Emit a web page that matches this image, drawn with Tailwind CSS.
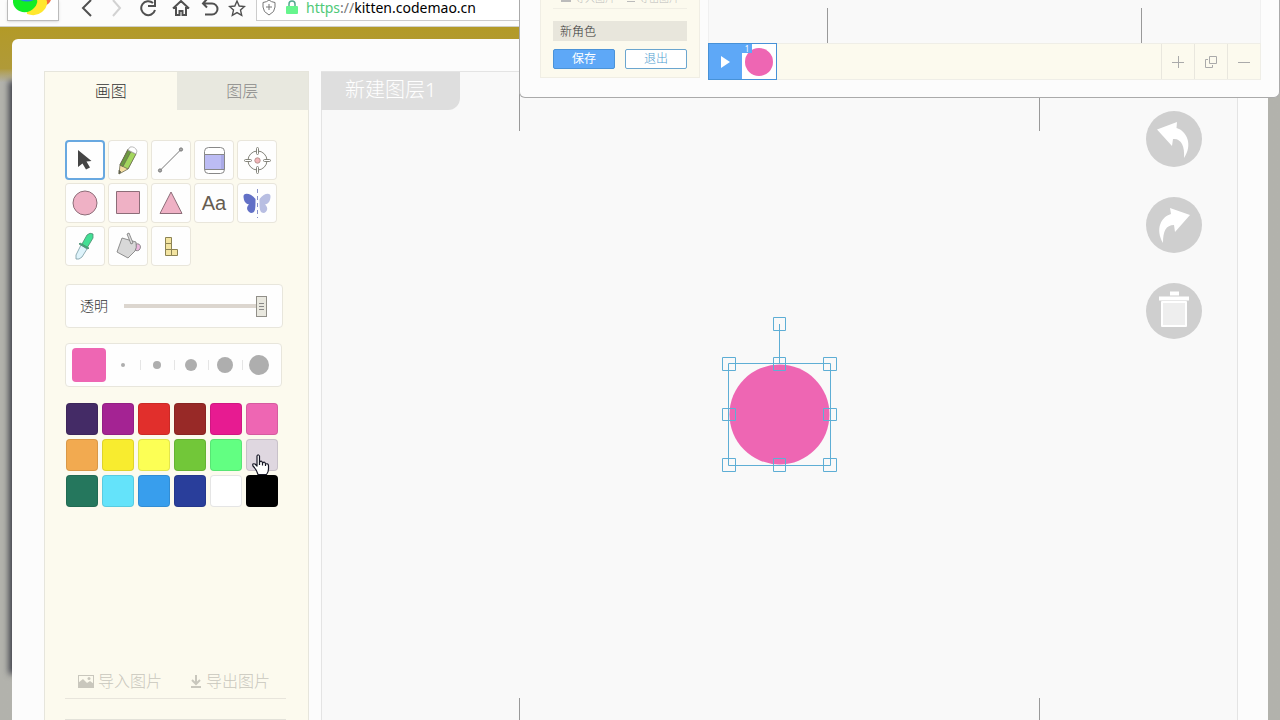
<!DOCTYPE html>
<html lang="zh-CN">
<head>
<meta charset="utf-8">
<meta name="viewport" content="width=device-width, initial-scale=1">
<title>画图</title>
<script src="https://cdn.jsdelivr.net/npm/@tailwindcss/browser@4"></script>
</head>
<body class="relative flex h-screen flex-col overflow-hidden bg-[#b2b2ac] font-['Noto_Sans','Noto_Sans_CJK_SC',sans-serif] font-light text-[#333]">

<!-- Browser toolbar -->
<header class="flex h-[27px] shrink-0 items-start border-b border-[#cfcfc8] bg-[#fcfcfc] pl-[7px] text-[#505050]">
  <div class="h-[21px] w-[52px] border-x border-b border-[#bbb] bg-white shadow-sm">
    <svg class="h-5 w-12" viewBox="0 0 48 20" aria-hidden="true">
      <path d="M24-4 43-10Q46 3 36 6Z" fill="#f36c3d"/>
      <path d="M36-4Q43 4 34 12Q28 17 19 14L18 5Z" fill="#ffe72e"/>
      <path d="M5 0C4 9 14 15 22 11C28 8 30 2 29 0Z" fill="#12ed25"/>
      <path d="M12 0Q21 4 29-2L24-5Z" fill="#2684e8"/>
    </svg>
  </div>
  <nav class="ml-[14px] flex h-[18px]" aria-label="浏览器导航">
    <button class="grid w-7 place-items-center" aria-label="后退"><svg class="size-[18px]" viewBox="0 0 18 18" fill="none" stroke="currentColor" stroke-width="2"><path d="M13 0 5 8l8 8"/></svg></button>
    <button class="grid w-[30px] place-items-center" aria-label="前进"><svg class="size-[18px]" viewBox="0 0 18 18" fill="none" stroke="#d2d2d2" stroke-width="2"><path d="m6 0 7 8-7 8"/></svg></button>
    <button class="grid w-[34px] place-items-center" aria-label="刷新"><svg class="size-[18px]" viewBox="0 0 18 18" fill="none" stroke="currentColor" stroke-width="2"><path d="M16 10A7 7 0 1 1 14 3M16-1V6H9"/></svg></button>
    <button class="grid w-8 place-items-center" aria-label="主页"><svg class="size-[18px]" viewBox="0 0 18 18" fill="none" stroke="currentColor" stroke-width="2"><path d="M1 8.500 9 1l8 7.500M4 7v8h3.500v-4h3v4H14V7"/></svg></button>
    <button class="grid w-[26px] place-items-center" aria-label="撤销"><svg class="size-[18px]" viewBox="0 0 18 18" fill="none" stroke="currentColor" stroke-width="2"><path d="M6-1 2 3.500l4 4M2 3.500h9a5.500 5.500 0 0 1 0 11H4"/></svg></button>
    <button class="grid w-7 place-items-center" aria-label="收藏"><svg class="size-[18px]" viewBox="0 0 18 18" fill="none" stroke="currentColor" stroke-width="1.400"><path d="m9 1 2.200 5 5.300.500-4 3.600 1.200 5.300L9 12.600l-4.700 2.800 1.200-5.300-4-3.600L6.800 6Z"/></svg></button>
  </nav>
  <div class="ml-[5px] flex h-[21px] flex-1 items-start border-b border-l border-[#ccc] bg-white pl-[5px]">
    <svg class="h-4 w-[14px]" viewBox="0 0 14 16" fill="none" stroke="#777" aria-hidden="true"><path d="M1 2.500Q5 2 7 0Q9 2 13 2.500V7Q13 12 7 15Q1 12 1 7ZM4 7h6M7 4v6"/></svg>
    <svg class="ml-[10px] h-4 w-3" viewBox="0 0 12 16" aria-hidden="true"><path d="M3 7V4a3 3 0 0 1 6 0v3" fill="none" stroke="#55a78f" stroke-width="1.500"/><rect y="6" width="12" height="8" rx="1" fill="#66f58d"/></svg>
    <a href="https://kitten.codemao.cn" class="ml-2 text-sm leading-4 font-normal text-black"><span class="text-[#4fc978]">https</span><span class="text-[#777]">://</span>kitten.codemao.cn</a>
  </div>
</header>

<!-- Dimmed page behind the editor -->
<div class="relative flex min-h-0 flex-1 flex-col bg-linear-to-b from-[#b39a27] from-0% via-[#b09a38] via-6% to-[#b2b2ac] to-8% px-3 pt-3">
  <div class="absolute top-[54px] bottom-[46px] left-[9px] w-5 bg-[#3c3e48] blur-[3px]"></div>
  <main class="relative flex min-h-0 flex-1 rounded-t-md bg-[#fcfcfc] pt-8 pr-[30px] pl-8">

    <!-- Tool panel -->
    <aside class="flex w-[265px] shrink-0 flex-col border border-b-0 border-[#e6e5dc] bg-[#fcfaee]">
      <div class="flex h-[38px] shrink-0 text-base" role="tablist">
        <button role="tab" aria-selected="true" class="flex-1 pb-px">画图</button>
        <button role="tab" aria-selected="false" class="flex-1 bg-[#e8e8df] pb-px text-[#888]">图层</button>
      </div>

      <div class="flex flex-1 flex-col px-5 pt-[30px]">
        <div class="grid grid-cols-[repeat(5,40px)] gap-[3px] *:h-10 *:rounded *:bg-[#fefefe]">
          <button aria-label="选择" aria-pressed="true" class="inset-ring-2 inset-ring-[#68a8e0]"><svg class="size-10" viewBox="0 0 40 40"><path d="M13 10v17l4.500-3.500 3.500 6 4-2-3.500-6 5-.500Z" fill="#444"/></svg></button>
          <button aria-label="铅笔" class="inset-ring inset-ring-[#e9e6db]"><svg class="size-10" viewBox="0 0 40 40" stroke="#6c6c52" stroke-width=".8" stroke-linejoin="round"><path d="m12 25 8-16 8 4-8 16-9 5Z" fill="#f5dda0"/><path d="m12 25 8-15 8 4-8 15Z" fill="#a4d65e"/><path d="m12 25 8-15 3 1.500-8 15Z" fill="#6c9b40"/><path d="m20 10 2-3q5-1 7 4l-1 3Z" fill="#fff" stroke="#aaa"/><path d="m11 30 2 2-2 2Z" fill="#555"/></svg></button>
          <button aria-label="直线" class="inset-ring inset-ring-[#e9e6db]"><svg class="size-10" viewBox="0 0 40 40" fill="#aaa" stroke="#777"><path d="M9 30.500 30 9.500"/><circle cx="9" cy="30.500" r="1.600"/><circle cx="30" cy="9.500" r="1.600"/></svg></button>
          <button aria-label="橡皮" class="inset-ring inset-ring-[#e9e6db]"><svg class="size-10" viewBox="0 0 40 40" stroke="#888"><rect x="10.500" y="7.500" width="20" height="26" rx="4" fill="#fff"/><path d="M10.500 14.500h20v15h-20Z" fill="#bcbcf4"/><path d="M27 15v14h3V15Z" fill="#aaaae6" stroke="none"/></svg></button>
          <button aria-label="中心点" class="inset-ring inset-ring-[#e9e6db]"><svg class="size-10" viewBox="0 0 40 40" fill="#fff" stroke="#85857c"><circle cx="20.500" cy="20.500" r="9.500"/><circle cx="20.500" cy="20.500" r="2.700" fill="#f2b5b9" stroke="#b9948f"/><rect x="19.500" y="7.500" width="2" height="7" rx="1"/><rect x="19.500" y="26.500" width="2" height="7" rx="1"/><rect x="7.500" y="19.500" width="7" height="2" rx="1"/><rect x="26.500" y="19.500" width="7" height="2" rx="1"/></svg></button>
          <button aria-label="圆形" class="inset-ring inset-ring-[#e9e6db]"><svg class="size-10" viewBox="0 0 40 40"><circle cx="20" cy="20" r="12" fill="#efb1c5" stroke="#8c6d78"/></svg></button>
          <button aria-label="矩形" class="inset-ring inset-ring-[#e9e6db]"><svg class="size-10" viewBox="0 0 40 40"><path d="M8.500 8.500h23v22h-23Z" fill="#efb1c5" stroke="#8c6d78"/></svg></button>
          <button aria-label="三角形" class="inset-ring inset-ring-[#e9e6db]"><svg class="size-10" viewBox="0 0 40 40"><path d="m20 9 11 21.500H9Z" fill="#efb1c5" stroke="#8c6d78"/></svg></button>
          <button aria-label="文字" class="font-['Liberation_Sans',sans-serif] text-xl font-normal text-[#665c50] inset-ring inset-ring-[#e9e6db]">Aa</button>
          <button aria-label="对称" class="inset-ring inset-ring-[#e9e6db]"><svg class="size-10" viewBox="0 0 40 40"><path d="M18.500 16C14 10 6 9 6.500 14Q7 21 12 21.500C8 25 11 29 14 30C18.500 30 18.500 26 18.500 16Z" fill="#6270c6"/><path d="M22.500 16C27 10 34 9 33.500 14Q33 21 28 21.500C32 25 30 29 27 30C22.500 30 22.500 26 22.500 16Z" fill="#b8bee2"/><path d="M20.500 6v29" stroke="#8790c7" stroke-dasharray="4 3"/></svg></button>
          <button aria-label="取色" class="inset-ring inset-ring-[#e9e6db]"><svg class="size-10" viewBox="0 0 40 40" stroke="#4e8a71" stroke-width=".8"><path d="m16 19 6 4-5 8q-3 3-6 2v-4Z" fill="#def3fb" stroke="#789aa2"/><path d="m17 18 5-9q3-3 6-1v4l-6 10Z" fill="#43df94"/><path d="m14 18 9 5 1-1-9-5Z" fill="#37ba7a"/></svg></button>
          <button aria-label="填充" class="inset-ring inset-ring-[#e9e6db]"><svg class="size-10" viewBox="0 0 40 40" stroke="#777" stroke-width=".8" stroke-linejoin="round"><path d="M28 18q4-1 4.500 3-.500 4.500-5 3.500Z" fill="#ebb8dd"/><path d="m14 12 14 4q1 6-1 9l-7 7-11-6Z" fill="#d8d8d8"/><path d="m19 8 2-1 4 10-2 1Z" fill="#ddd"/></svg></button>
          <button aria-label="图块" class="inset-ring inset-ring-[#e9e6db]"><svg class="size-10" viewBox="0 0 40 40" fill="#f3e4a1" stroke="#8c8353"><path d="M14.500 11.500h6v6h-6Zm0 6h6v6h-6Zm0 6h6v6h-6Zm6 0h6v6h-6Z"/></svg></button>
        </div>

        <div class="mt-[18px] flex h-11 w-[218px] items-center rounded border border-[#e8e6dc] bg-[#fefefe] pl-[14px]">
          <label for="opacity" class="text-sm">透明</label>
          <input id="opacity" type="range" min="0" max="100" value="100" class="ml-4 h-6 w-[143px] appearance-none bg-transparent [&::-webkit-slider-runnable-track]:h-1 [&::-webkit-slider-runnable-track]:bg-[#dcd6cf] [&::-webkit-slider-thumb]:-mt-2 [&::-webkit-slider-thumb]:h-[21px] [&::-webkit-slider-thumb]:w-[11px] [&::-webkit-slider-thumb]:appearance-none [&::-webkit-slider-thumb]:border [&::-webkit-slider-thumb]:border-[#918f88] [&::-webkit-slider-thumb]:bg-[linear-gradient(#888,#888),linear-gradient(#888,#888),linear-gradient(#888,#888),linear-gradient(#e9e8df,#e9e8df)] [&::-webkit-slider-thumb]:bg-[size:5px_1px,5px_1px,5px_1px,100%_100%] [&::-webkit-slider-thumb]:bg-[position:2px_6px,2px_9px,2px_12px,0_0] [&::-webkit-slider-thumb]:bg-no-repeat">
        </div>

        <div class="mt-[15px] flex h-11 w-[217px] items-center rounded border border-[#e8e6dc] bg-[#fefefe] pl-[6px]">
          <button aria-label="当前颜色" class="size-[34px] rounded bg-[#ee66b3]"></button>
          <div class="flex *:grid *:h-6 *:w-[34px] *:place-items-center">
            <button aria-label="粗细 1"><span class="size-1 rounded-full bg-[#aeaeae]"></span></button>
            <button aria-label="粗细 2" class="bg-[linear-gradient(#e5e5e5,#e5e5e5)] bg-[size:1px_10px] bg-[position:0_50%] bg-no-repeat"><span class="size-2 rounded-full bg-[#aeaeae]"></span></button>
            <button aria-label="粗细 3" class="bg-[linear-gradient(#e5e5e5,#e5e5e5)] bg-[size:1px_10px] bg-[position:0_50%] bg-no-repeat"><span class="size-3 rounded-full bg-[#aeaeae]"></span></button>
            <button aria-label="粗细 4" class="bg-[linear-gradient(#e5e5e5,#e5e5e5)] bg-[size:1px_10px] bg-[position:0_50%] bg-no-repeat"><span class="size-4 rounded-full bg-[#aeaeae]"></span></button>
            <button aria-label="粗细 5" class="bg-[linear-gradient(#e5e5e5,#e5e5e5)] bg-[size:1px_10px] bg-[position:0_50%] bg-no-repeat"><span class="size-5 rounded-full bg-[#aeaeae]"></span></button>
          </div>
        </div>

        <div class="mt-4 ml-px grid grid-cols-[repeat(6,32px)] gap-1 *:h-8 *:rounded *:inset-ring *:inset-ring-black/10">
          <button aria-label="深紫" class="bg-[#442b66]"></button>
          <button aria-label="紫色" class="bg-[#a42393]"></button>
          <button aria-label="红色" class="bg-[#e12f2c]"></button>
          <button aria-label="棕红" class="bg-[#982927]"></button>
          <button aria-label="玫红" class="bg-[#e71b91]"></button>
          <button aria-label="粉色" class="bg-[#ee66b3]"></button>
          <button aria-label="橙色" class="bg-[#f2aa50]"></button>
          <button aria-label="黄色" class="bg-[#f8ec2f]"></button>
          <button aria-label="亮黄" class="bg-[#fcff55]"></button>
          <button aria-label="绿色" class="bg-[#72c739]"></button>
          <button aria-label="亮绿" class="bg-[#62ff82]"></button>
          <button aria-label="浅灰" class="relative z-10 bg-[#dfd7e0]">
            <svg class="absolute top-[15px] left-[6px] h-[22px] w-[18px]" viewBox="0 0 18 22" fill="#fff" stroke="#161625" stroke-width="1.200" stroke-linejoin="round"><path d="M5 12V2Q6-.500 7.500 2v6Q10 6 10.500 9Q13 7 13.500 10Q16.500 9 16.500 12v3q0 3-2 5.500H6Q5 16 1 12q-1-3 2-2Z"/><path d="M7.500 8v3M10.500 9v2.500M13.500 10v2" fill="none"/></svg>
          </button>
          <button aria-label="墨绿" class="bg-[#25775d]"></button>
          <button aria-label="青色" class="bg-[#64e3fa]"></button>
          <button aria-label="蓝色" class="bg-[#389eed]"></button>
          <button aria-label="深蓝" class="bg-[#293e9b]"></button>
          <button aria-label="白色" class="bg-white"></button>
          <button aria-label="黑色" class="bg-black"></button>
        </div>

        <div class="mt-auto flex h-8 w-[221px] shrink-0 items-center border-b border-[#e8e5dc] pb-[3px] pl-[13px] text-base text-[#c9c7bd]">
          <button class="flex items-center gap-1"><svg class="h-[13px] w-4" viewBox="0 0 16 13" aria-hidden="true"><rect x=".500" y=".500" width="15" height="12" fill="none" stroke="currentColor"/><path d="M0 8l5-4 4 4 3-2 4 3v4H0Z" fill="currentColor"/><circle cx="11" cy="3.500" r="1.500" fill="currentColor"/></svg>导入图片</button>
          <button class="ml-7 flex items-center gap-1"><svg class="h-[13px] w-3" viewBox="0 0 12 13" fill="none" stroke="currentColor" stroke-width="2" aria-hidden="true"><path d="M6 0v8M2 5l4 4 4-4M1 12h10"/></svg>导出图片</button>
        </div>
        <div class="mt-5 h-px w-[221px] shrink-0 bg-[#e3e2d9]"></div>
      </div>
    </aside>

    <!-- Drawing canvas -->
    <section class="relative ml-3 flex flex-1 items-start justify-between border border-b-0 border-[#e4e4e4] bg-[#f9f9f9]">
      <h2 class="-ml-px h-[38px] rounded-br-xl bg-[#dedede] px-6 text-xl leading-9 font-light text-white">新建图层1</h2>

      <svg class="absolute top-0 left-1/2 h-[649px] w-[522px] -translate-x-1/2" viewBox="0 0 522 649" fill="none" aria-hidden="true">
        <path d="M.500 0v59M520.500 0v59M.500 626v23M520.500 626v23" stroke="#999"/>
        <circle cx="260.500" cy="342.500" r="50" fill="#ee66b3"/>
        <g stroke="#5eaed5">
          <path d="M209.500 291.500h102v102h-102ZM260.500 252v39"/>
          <path d="M254.500 245.500h12v13h-12ZM203.500 285.500h13v13h-13ZM254.500 285.500h12v13h-12ZM304.500 285.500h13v13h-13ZM203.500 336.500h13v12h-13ZM304.500 336.500h13v12h-13ZM203.500 386.500h13v13h-13ZM254.500 386.500h12v13h-12ZM304.500 386.500h13v13h-13Z"/>
        </g>
      </svg>

      <div class="relative mt-[39px] mr-[35px] flex flex-col gap-[30px] *:size-14 *:rounded-full *:bg-[#cfcfcf]">
        <button aria-label="撤销操作"><svg class="size-14" viewBox="0 0 56 56" fill="#fff"><path d="M11 18.500 31 11l-.500 6C41 20 47 34 38 47C39 35 35 27 27 28l-1 7Z"/></svg></button>
        <button aria-label="重做操作"><svg class="size-14" viewBox="0 0 56 56" fill="#fff"><path d="M44 18 24 11l1 6C15 20 9 32 17 46C17 34 20 28 28 28l1 7Z"/></svg></button>
        <button aria-label="清空画布"><svg class="size-14" viewBox="0 0 56 56"><path d="M24 8.500h9v4h-9ZM13 13.500h30v4H13Z" fill="#fff"/><path d="M16 19h24v24H16Z" fill="#eee" stroke="#fff" stroke-width="2" stroke-linejoin="round"/></svg></button>
      </div>
    </section>
  </main>
</div>

<!-- Lower edge of the second editor window -->
<section class="absolute top-0 right-0 flex h-[98px] w-[761px] items-start rounded-b-md border-x border-b border-[#aaa] bg-[#fcfcfc] pr-[18px] pl-5">
  <div class="h-[78px] w-[160px] overflow-hidden border-x border-b border-[#f0eee4] bg-[#fcfaee] px-3">
    <div class="-mt-2 flex h-3 items-center justify-between px-2 text-[10px] text-[#bbb]"><button class="flex items-center gap-1"><svg class="h-2 w-[10px]" viewBox="0 0 10 8" aria-hidden="true"><path d="M.500.500h9v7h-9Z" fill="none" stroke="currentColor"/><path d="m0 5 4-2 3 2 3-1v4H0Z" fill="currentColor"/></svg>导入图片</button><button class="flex items-center gap-1"><svg class="h-2 w-2" viewBox="0 0 8 8" fill="none" stroke="currentColor" aria-hidden="true"><path d="M4 0v5M1 3l3 3 3-3M0 7.500h8"/></svg>导出图片</button></div>
    <div class="mt-1 h-px bg-[#f0eee4]"></div>
    <input aria-label="角色名称" value="新角色" class="mt-3 block h-5 w-full bg-[#e8e6dc] px-[7px] text-xs">
    <div class="mt-2 flex gap-[10px] text-xs *:h-5 *:flex-1 *:rounded-xs">
      <button class="border border-[#4b93d8] bg-[#5ea8f7] font-normal text-white">保存</button>
      <button class="border border-[#6ba6cf] bg-white text-[#4e9cd0]">退出</button>
    </div>
  </div>
  <div class="ml-2 flex flex-1 flex-col">
    <div class="flex h-11 items-end border-x border-[#f0f0f0] bg-[#f9f9f9] pl-[118px]">
      <div class="h-9 w-[315px] border-x border-[#999]"></div>
    </div>
    <div class="-mt-px flex h-[37px] border border-[#efeee7] bg-[#fcfaee]">
      <div class="-my-px -ml-px flex w-[69px] border border-[#4791d7] bg-[#5ea8f7]">
        <button aria-label="播放" class="grid w-[33px] place-items-center"><svg class="h-3 w-[10px]" viewBox="0 0 10 12" fill="#fff"><path d="m0 0 9 6-9 6Z"/></svg></button>
        <button aria-label="第 1 帧" class="relative grid flex-1 place-items-center bg-white"><span class="size-7 rounded-full bg-[#ee66b3]"></span><span class="absolute top-0 left-0 h-[9px] w-[10px] bg-[#5ea8f7] text-[8px] leading-[9px] font-normal text-white">1</span></button>
      </div>
      <div class="ml-auto flex text-[#aaa] *:grid *:w-[33px] *:place-items-center *:border-l *:border-[#e9e7de]">
        <button aria-label="添加帧"><svg class="size-3" viewBox="0 0 12 12" stroke="currentColor"><path d="M6.500 0v12M0 6.500h12"/></svg></button>
        <button aria-label="复制帧"><svg class="size-3" viewBox="0 0 12 12" fill="none" stroke="currentColor"><path d="M4.500.500h7v7h-7ZM3 3.500H.500v8h7V9"/></svg></button>
        <button aria-label="删除帧"><svg class="size-3" viewBox="0 0 12 12" stroke="currentColor"><path d="M0 6.500h12"/></svg></button>
      </div>
    </div>
  </div>
</section>
</body>
</html>
